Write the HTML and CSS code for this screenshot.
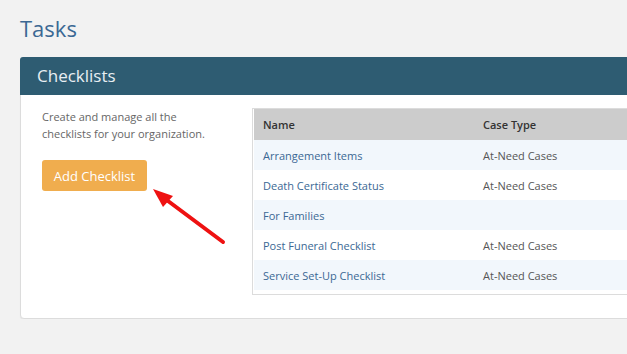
FILE: index.html
```html
<!DOCTYPE html>
<html lang="en">
<head>
    <meta charset="UTF-8">
    <title>Tasks</title>
    <link rel="stylesheet" href="styles.css">
</head>
<body>
    <h1 class="page-title">Tasks</h1>
    <div class="panel">
        <div class="panel-heading">Checklists</div>
        <div class="panel-body">
            <div class="intro">
                <p>Create and manage all the checklists for your organization.</p>
                <button class="btn-add">Add Checklist</button>
                <svg class="arrow" width="80" height="60" viewBox="0 0 80 60">
                    <line x1="71" y1="53" x2="12" y2="9" stroke="#ee1111" stroke-width="4" stroke-linecap="round"/>
                    <polygon points="1,0 21,7 11,18" fill="#ee1111"/>
                </svg>
            </div>
            <div class="table-wrap">
                <table class="checklists">
                    <thead>
                        <tr><th class="col-name">Name</th><th>Case Type</th></tr>
                    </thead>
                    <tbody>
                        <tr><td><a href="#">Arrangement Items</a></td><td>At-Need Cases</td></tr>
                        <tr><td><a href="#">Death Certificate Status</a></td><td>At-Need Cases</td></tr>
                        <tr><td><a href="#">For Families</a></td><td></td></tr>
                        <tr><td><a href="#">Post Funeral Checklist</a></td><td>At-Need Cases</td></tr>
                        <tr><td><a href="#">Service Set-Up Checklist</a></td><td>At-Need Cases</td></tr>
                    </tbody>
                </table>
            </div>
        </div>
    </div>
</body>
</html>
```

FILE: styles.css
```css
body {
    background-color: #f2f2f2;
    margin: 0;
    padding: 0 20px;
    font-family: 'Open Sans', 'Liberation Sans', sans-serif;
    overflow: hidden;
    width: 800px;
}
.page-title {
    font-size: 22px;
    font-weight: normal;
    color: #3b6894;
    margin: 0;
    padding-top: 13px;
    height: 57px;
    box-sizing: border-box;
}
.panel {
    background-color: white;
    border: 1px solid #dcdcdc;
    border-radius: 4px;
    box-shadow: 0 1px 1px rgba(0, 0, 0, 0.05);
}
.panel-heading {
    background-color: #2e5c72;
    color: #e8eef2;
    font-size: 17px;
    height: 38px;
    line-height: 38px;
    padding-left: 17px;
    border-radius: 3px 3px 0 0;
    margin: -1px -1px 0 -1px;
}
.panel-body {
    display: flex;
    padding: 13px 0 23px 21px;
}
.intro {
    width: 210px;
    position: relative;
}
.intro p {
    font-size: 11px;
    line-height: 17px;
    color: #666;
    margin: 0 0 18px 0;
    width: 180px;
}
.btn-add {
    background-color: #f0ad4e;
    color: white;
    border: none;
    border-radius: 3px;
    font-family: 'Open Sans', 'Liberation Sans', sans-serif;
    font-size: 13px;
    height: 31px;
    width: 105px;
    padding: 0;
}
.arrow {
    position: absolute;
    left: 110px;
    top: 81px;
}
.table-wrap {
    border: 1px solid #dcdcdc;
    padding: 0 0 4px 1px;
    flex: 1;
}
.checklists {
    width: 100%;
    border-collapse: collapse;
    font-size: 11px;
}
.checklists th {
    background-color: #cccccc;
    color: #333;
    font-weight: 600;
    text-align: left;
    height: 31px;
    padding: 0 9px;
}
.checklists th.col-name {
    width: 202px;
}
.checklists td {
    height: 30px;
    padding: 0 9px;
    color: #555;
}
.checklists tbody tr:nth-child(odd) {
    background-color: #f2f7fc;
}
.checklists a {
    color: #3b6894;
    text-decoration: none;
}
```
